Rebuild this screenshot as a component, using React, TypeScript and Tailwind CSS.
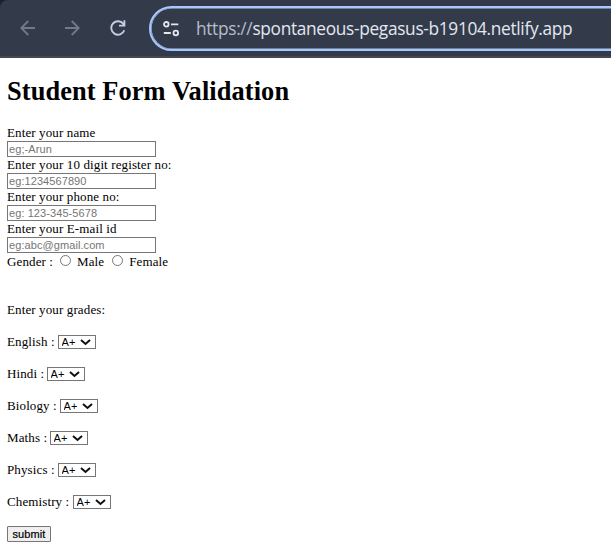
import React from 'react';

const fields = [
  { label: 'Enter your name', placeholder: 'eg;-Arun' },
  { label: 'Enter your 10 digit register no:', placeholder: 'eg:1234567890' },
  { label: 'Enter your phone no:', placeholder: 'eg: 123-345-5678' },
  { label: 'Enter your E-mail id', placeholder: 'eg:abc@gmail.com' },
];

const subjects = [
  { name: 'English', label: 'w-[51px]' },
  { name: 'Hindi', label: 'w-[40px]' },
  { name: 'Biology', label: 'w-[53px]' },
  { name: 'Maths', label: 'w-[43px]' },
  { name: 'Physics', label: 'w-[51px]' },
  { name: 'Chemistry', label: 'w-[66px]' },
];

function Toolbar() {
  return (
    <div className="bg-[#1b2130]">
      <header className="flex h-[58px] items-start overflow-hidden rounded-tl-[8px] border-b-2 border-[#46474f] bg-[#333b4b] pt-[6px] pl-[20px]">
        <div className="flex h-[43px] w-[129px] shrink-0 items-center">
          <svg width="16" height="16" viewBox="0 0 16 16" fill="none" stroke="#727988" strokeWidth="1.8">
            <path d="M15 8H1.5M8.3 1L1.3 8l7 7" />
          </svg>
          <svg className="ml-[29px]" width="16" height="16" viewBox="0 0 16 16" fill="none" stroke="#727988" strokeWidth="1.8">
            <path d="M0 8h13.5M6.7 1l7 7-7 7" />
          </svg>
          <svg className="ml-[29px]" width="16" height="16" viewBox="0 0 16 16" fill="none" stroke="#c3cee5" strokeWidth="1.9">
            <path d="M13.6 4.3A6.7 6.7 0 1 0 14.3 10.2M14.4 0.3V5.6H9" />
          </svg>
        </div>
        <div className="flex h-[45px] w-[520px] shrink-0 items-center rounded-full border-2 border-[#a8c7fa] pl-[12px] shadow-[inset_0_0_0_0.6px_#a8c7fa]">
          <svg width="18" height="16" viewBox="0 0 18 16" fill="none" stroke="#e3e6ec" strokeWidth="1.8">
            <circle cx="3.3" cy="3.3" r="2.3" />
            <path d="M8 3.3H15.3M.8 12H7.8" />
            <circle cx="12.8" cy="12" r="2.3" />
          </svg>
          <div className="mt-px ml-[15px] whitespace-nowrap font-['Open_Sans','Noto_Sans',sans-serif] text-[17.3px] leading-6 tracking-[-0.32px] text-[#e3e7ef]">
            <span className="text-[#b7bdc9]">https://</span>spontaneous-pegasus-b19104.netlify.app
          </div>
        </div>
      </header>
    </div>
  );
}

function GradeSelect() {
  return (
    <div className="relative h-[14px] w-[38px]">
      <select className="block h-[14px] w-[38px] appearance-none rounded-none border border-[#767676] bg-white pl-[2.6px] font-['Liberation_Sans',Arial,sans-serif] text-[11px] leading-[12px] text-black">
        <option>A+</option>
        <option>A</option>
        <option>B+</option>
        <option>B</option>
        <option>C</option>
      </select>
      <svg className="pointer-events-none absolute top-[4px] right-[5px]" width="11" height="7" viewBox="0 0 11 7" fill="none" stroke="#111" strokeWidth="2">
        <path d="M1 1l4.5 4L10 1" />
      </svg>
    </div>
  );
}

function GenderOption({ label }: { label: string }) {
  return (
    <label className="flex items-center">
      <input type="radio" name="gender" className="mr-[6px] mb-[2px] h-[11px] w-[11px] appearance-none rounded-full border border-[#767676] bg-white" />
      {label}
    </label>
  );
}

export default function App() {
  return (
    <div className="h-[552px] overflow-hidden bg-white font-['Liberation_Serif','Times_New_Roman',serif] text-[13px] leading-4 tracking-[0.12px] text-black">
      <Toolbar />
      <main className="pt-[18px] pl-[7px]">
        <h1 className="text-[26.4px] leading-[30px] font-bold tracking-[0.09px]">Student Form Validation</h1>
        <form className="mt-[19px]">
          {fields.map((field) => (
            <div key={field.label}>
              <label className="block h-4">{field.label}</label>
              <input
                placeholder={field.placeholder}
                className="block h-4 w-[149px] border border-[#767676] px-px font-['Liberation_Sans',Arial,sans-serif] text-[11px] leading-[14px] tracking-[0.08px] placeholder:text-[#757575]"
              />
            </div>
          ))}
          <div className="flex h-[17px] items-center">
            <span className="w-[53px]">Gender :</span>
            <GenderOption label="Male" />
            <span className="w-[8px]" />
            <GenderOption label="Female" />
          </div>
          <p className="mt-[32px] h-4">Enter your grades:</p>
          {subjects.map((subject) => (
            <div key={subject.name} className="mt-4 flex h-4 items-center">
              <span className={`${subject.label} whitespace-nowrap`}>{subject.name} :</span>
              <GradeSelect />
            </div>
          ))}
          <button
            type="button"
            className="mt-4 block h-4 w-[44px] rounded-[1px] border border-[#767676] bg-[#efefef] font-['Liberation_Sans',Arial,sans-serif] text-[11px] leading-[14px] tracking-[0.1px] text-black [-webkit-text-stroke:0.2px_black]"
          >
            submit
          </button>
        </form>
      </main>
    </div>
  );
}
